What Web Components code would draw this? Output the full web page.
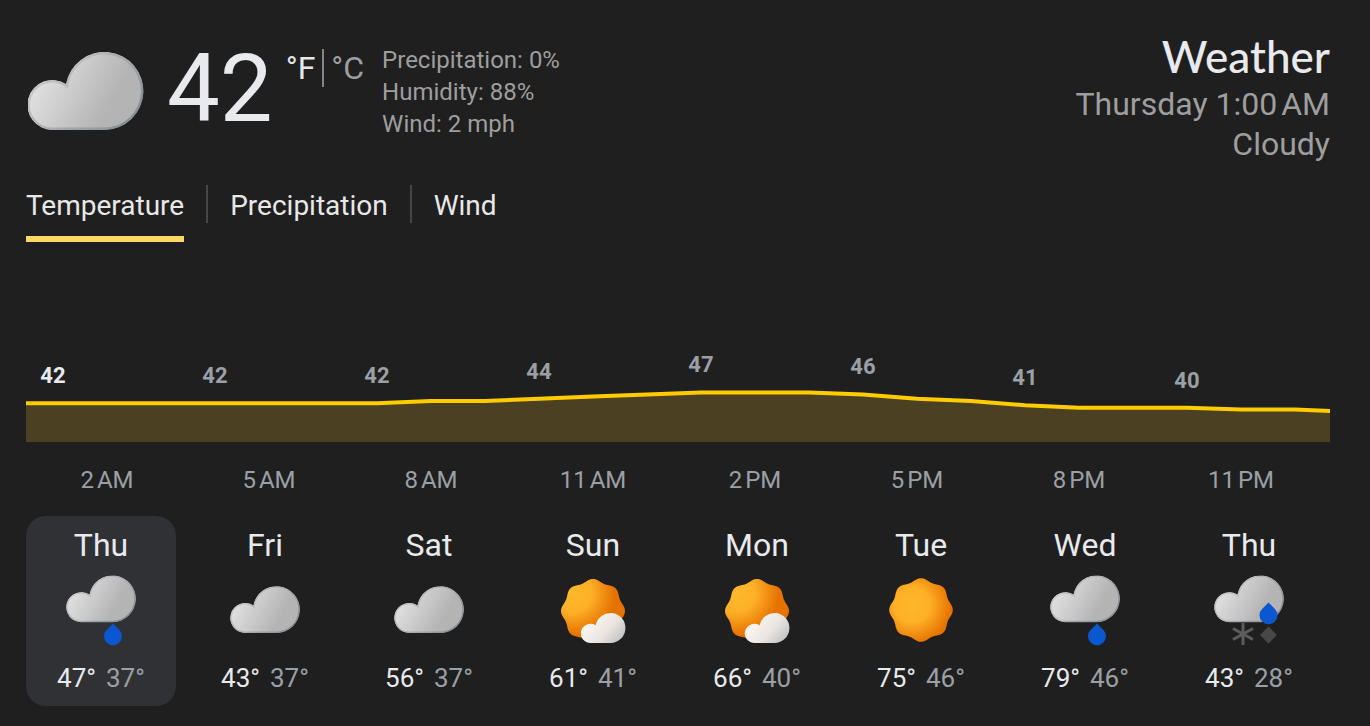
<!DOCTYPE html>
<html lang="en">
<head>
<meta charset="utf-8">
<title>Weather</title>
<style>
    body {
        margin: 0;
        background: #1f1f1f;
        color: #e8e8e8;
        font-family: Roboto, "Liberation Sans", sans-serif;
    }
</style>
</head>
<body>
<weather-card>
    <weather-now slot="now" icon="cloudy" temp="42">
        <span slot="details">Precipitation: 0%</span>
        <span slot="details">Humidity: 88%</span>
        <span slot="details">Wind: 2 mph</span>
        <span slot="title">Weather</span>
        <span slot="when">Thursday 1:00&#x202F;AM</span>
        <span slot="sky">Cloudy</span>
    </weather-now>
    <weather-tabs slot="tabs" names="Temperature,Precipitation,Wind"></weather-tabs>
    <hourly-chart slot="chart"></hourly-chart>
    <forecast-day slot="days" icon="rain" high="47" low="37" selected>Thu</forecast-day>
    <forecast-day slot="days" icon="cloudy" high="43" low="37">Fri</forecast-day>
    <forecast-day slot="days" icon="cloudy" high="56" low="37">Sat</forecast-day>
    <forecast-day slot="days" icon="partly" high="61" low="41">Sun</forecast-day>
    <forecast-day slot="days" icon="partly" high="66" low="40">Mon</forecast-day>
    <forecast-day slot="days" icon="sunny" high="75" low="46">Tue</forecast-day>
    <forecast-day slot="days" icon="rain" high="79" low="46">Wed</forecast-day>
    <forecast-day slot="days" icon="mix" high="43" low="28">Thu</forecast-day>
</weather-card>

<script>
// the cloud outline is 116 x 78, from 0,0
const CLOUD = 'M25 78A25 25 0 1 1 38 32A39 39 0 1 1 77 78Z';

function sunPath(cx, cy, r) {
    let d = '';
    for (let i = 0; i <= 160; i++) {
        const a = i / 160 * Math.PI * 2;
        const rr = r - 1.4 + 1.4 * Math.cos(8 * a);
        d += (i ? 'L' : 'M') + (cx + rr * Math.sin(a)).toFixed(2) + ' ' + (cy - rr * Math.cos(a)).toFixed(2);
    }
    return d + 'Z';
}

const DEFS = `
<defs>
    <linearGradient id="cloud" gradientUnits="userSpaceOnUse" x1="8" y1="30" x2="75" y2="66">
        <stop offset="0" stop-color="#e0e0e0"/>
        <stop offset="1" stop-color="#b4b4b4"/>
    </linearGradient>
    <linearGradient id="edge" gradientUnits="userSpaceOnUse" x1="30" y1="10" x2="95" y2="70">
        <stop offset="0" stop-color="#c6c6c6"/>
        <stop offset="1" stop-color="#899097"/>
    </linearGradient>
    <linearGradient id="white" gradientUnits="userSpaceOnUse" x1="20" y1="10" x2="95" y2="75">
        <stop offset="0" stop-color="#fff8f3"/>
        <stop offset="0.6" stop-color="#ebe5e1"/>
        <stop offset="1" stop-color="#c5c6c5"/>
    </linearGradient>
    <radialGradient id="sun" cx="0.36" cy="0.42" r="0.62">
        <stop offset="0" stop-color="#ffb829"/>
        <stop offset="0.45" stop-color="#feb026"/>
        <stop offset="1" stop-color="#e67200"/>
    </radialGradient>
    <radialGradient id="sunLow" cx="0.18" cy="0.22" r="0.66">
        <stop offset="0" stop-color="#ffb92b"/>
        <stop offset="0.45" stop-color="#fdb027"/>
        <stop offset="1" stop-color="#e67200"/>
    </radialGradient>
    <clipPath id="cloudClip"><path d="${CLOUD}"/></clipPath>
</defs>`;

const cloud = (transform) => `
<g transform="${transform}" clip-path="url(#cloudClip)">
    <path d="${CLOUD}" fill="url(#cloud)" stroke="url(#edge)" stroke-width="5"/>
</g>`;

const drop = (x, y) => `<path transform="translate(${x} ${y})" fill="#0b57d0" d="M9 0L15.2 6.2A9 9 0 1 1 2.8 6.2Z"/>`;

const ICONS = {
    cloudy: ['0 0 72 72', cloud('translate(1.600 12.200) scale(0.6)')],
    rain: ['0 0 72 72', cloud('translate(1.600 1.400) scale(0.6)') + drop(39, 49.5)],
    mix: ['0 0 72 72', cloud('translate(1.600 1.400) scale(0.6)') + drop(46.5, 28.5) +
        `<path d="M30 49V71M20 54.500L40 65.500M40 54.500L20 65.500" stroke="#5c5c5c" stroke-width="3"/>
        <path d="M55.500 52.500L64 61L55.500 69.500L47 61Z" fill="#474747"/>`],
    sunny: ['0 0 72 72', `<path d="${sunPath(36, 36, 31.8)}" fill="url(#sun)"/>`],
    partly: ['0 0 72 72', `<path d="${sunPath(36, 37, 32)}" fill="url(#sunLow)"/>
        <path transform="translate(24 39) scale(0.385)" d="${CLOUD}" fill="url(#white)"/>`],
    now: ['0 0 116 78', cloud('translate(0 0)')]
};

class WeatherIcon extends HTMLElement {
    connectedCallback() {
        const [box, body] = ICONS[this.getAttribute('name')];
        this.attachShadow({mode: 'open'}).innerHTML = `
        <style>
            :host { display: block; }
            svg { display: block; width: 100%; height: 100%; }
        </style>
        <svg viewBox="${box}" aria-hidden="true">${DEFS}${body}</svg>`;
    }
}

class WeatherCard extends HTMLElement {
    connectedCallback() {
        this.attachShadow({mode: 'open'}).innerHTML = `
        <style>
            :host {
                display: block;
                padding: 36px 40px 20px 26px;
            }
            .days {
                display: grid;
                grid-template-columns: repeat(8, 1fr);
                gap: 14px;
                margin: 20px 6px 0 0;
            }
        </style>
        <slot name="now"></slot>
        <slot name="tabs"></slot>
        <slot name="chart"></slot>
        <div class="days"><slot name="days"></slot></div>`;
    }
}

class WeatherNow extends HTMLElement {
    connectedCallback() {
        this.attachShadow({mode: 'open'}).innerHTML = `
        <style>
            :host {
                display: flex;
                align-items: flex-start;
                height: 128px;
            }
            weather-icon {
                width: 116px;
                height: 78px;
                margin: 16px 23px 0 2px;
            }
            .temp {
                font-size: 94px;
                line-height: 106px;
                color: #e8eaed;
            }
            .units {
                display: flex;
                margin: 13px 18px 0 13px;
            }
            .units button {
                border: 0;
                padding: 0 7px;
                background: none;
                color: #9e9e9e;
                font: 32px/38px Roboto, sans-serif;
            }
            .units button:first-child {
                padding-left: 0;
                color: #e8e8e8;
                border-right: 2px solid #80868b;
            }
            .units button:last-child { padding-right: 0; }
            .details {
                display: flex;
                flex-direction: column;
                margin-top: 8px;
                color: #9e9e9e;
                font-size: 24px;
                line-height: 32px;
            }
            .summary {
                display: flex;
                flex-direction: column;
                margin-left: auto;
                text-align: right;
                color: #9e9e9e;
                font-size: 32px;
                line-height: 40px;
            }
            h1 {
                margin: 0 0 8px;
                color: #e8eaed;
                font: 500 44px/40px Lato, Roboto, sans-serif;
            }
        </style>
        <weather-icon name="now"></weather-icon>
        <div class="temp">${this.getAttribute('temp')}</div>
        <div class="units">
            <button type="button" aria-pressed="true">°F</button>
            <button type="button" aria-pressed="false">°C</button>
        </div>
        <div class="details"><slot name="details"></slot></div>
        <div class="summary">
            <h1><slot name="title"></slot></h1>
            <slot name="when"></slot>
            <slot name="sky"></slot>
        </div>`;
    }
}

class WeatherTabs extends HTMLElement {
    connectedCallback() {
        const names = this.getAttribute('names').split(',');
        this.attachShadow({mode: 'open'}).innerHTML = `
        <style>
            :host {
                display: flex;
                align-items: flex-start;
                margin-top: 21px;
            }
            button {
                border: 0;
                border-bottom: 6px solid transparent;
                padding: 0 0 10px;
                background: none;
                color: #e8e8e8;
                font: 28px/41px Roboto, sans-serif;
                cursor: pointer;
            }
            button[aria-selected="true"] { border-color: #fdd663; }
            i {
                width: 2px;
                height: 38px;
                margin: 0 22px;
                background: #444746;
            }
        </style>
        ${names.map((name, i) => `<button type="button" role="tab" aria-selected="${i === 0}">${name}</button>`).join('<i></i>')}`;
        this.setAttribute('role', 'tablist');
        this.shadowRoot.querySelectorAll('button').forEach((button) => {
            button.addEventListener('click', () => this.select(button));
        });
    }

    select(tab) {
        this.shadowRoot.querySelectorAll('button').forEach((button) => {
            button.setAttribute('aria-selected', button === tab);
        });
    }
}

class HourlyChart extends HTMLElement {
    connectedCallback() {
        const temps = [42, 42, 42, 44, 47, 46, 41, 40];
        const hours = ['2 AM', '5 AM', '8 AM', '11 AM', '2 PM', '5 PM', '8 PM', '11 PM'];
        // height of each label above the bottom of the area
        const lift = [52, 52, 52, 56, 63, 61, 50, 47];
        const line = '0,51.300 351,51.300 405,49 459,49 513,46.800 567,44.500 675,40.400 783,40.400 837,42.500 891,46.700 945,49 999,53.300 1053,55.700 1161,55.700 1215,57.600 1269,57.600 1304,59';
        this.attachShadow({mode: 'open'}).innerHTML = `
        <style>
            :host { display: block; margin-top: 98px; }
            .plot { display: grid; }
            svg, .temps { grid-area: 1 / 1; }
            svg {
                display: block;
                width: 100%;
                height: 90px;
                align-self: end;
            }
            .temps, .hours {
                display: grid;
                grid-template-columns: repeat(8, 1fr);
                margin-right: 8px;
                text-align: center;
                color: #9aa0a6;
            }
            .temps {
                height: 102px;
                align-items: end;
                font-size: 22px;
                line-height: 28px;
                font-weight: 700;
            }
            .temps span {
                width: 33.3%;
                padding-bottom: var(--lift);
            }
            .temps span:first-child { color: #e8eaed; }
            .hours {
                margin-top: 22px;
                font-size: 24px;
                line-height: 32px;
            }
        </style>
        <div class="plot">
            <svg viewBox="0 0 1304 90" preserveAspectRatio="none" aria-hidden="true">
                <polygon points="${line} 1304,90 0,90" fill="#ffc733" fill-opacity="0.2"/>
                <polyline points="${line}" fill="none" stroke="#ffcc00" stroke-width="4"/>
            </svg>
            <div class="temps">${temps.map((t, i) => `<span style="--lift: ${lift[i]}px">${t}</span>`).join('')}</div>
        </div>
        <div class="hours">${hours.map((h) => `<span>${h.replace(' ', '\u202f')}</span>`).join('')}</div>`;
    }
}

class ForecastDay extends HTMLElement {
    connectedCallback() {
        this.attachShadow({mode: 'open'}).innerHTML = `
        <style>
            :host {
                display: flex;
                flex-direction: column;
                align-items: center;
                box-sizing: border-box;
                height: 190px;
                padding-top: 8px;
                border-radius: 20px;
            }
            :host([selected]) { background: #303134; }
            .name {
                color: #e8eaed;
                font-size: 32px;
                line-height: 42px;
            }
            weather-icon {
                width: 72px;
                height: 72px;
                margin: 8px 0 16px;
            }
            .range {
                display: flex;
                gap: 10px;
                font-size: 26px;
                line-height: 32px;
                color: #9aa0a6;
            }
            .high { color: #e8eaed; }
        </style>
        <div class="name"><slot></slot></div>
        <weather-icon name="${this.getAttribute('icon')}"></weather-icon>
        <div class="range">
            <span class="high">${this.getAttribute('high')}°</span>
            <span>${this.getAttribute('low')}°</span>
        </div>`;
    }
}

customElements.define('weather-icon', WeatherIcon);
customElements.define('weather-card', WeatherCard);
customElements.define('weather-now', WeatherNow);
customElements.define('weather-tabs', WeatherTabs);
customElements.define('hourly-chart', HourlyChart);
customElements.define('forecast-day', ForecastDay);
</script>
</body>
</html>
